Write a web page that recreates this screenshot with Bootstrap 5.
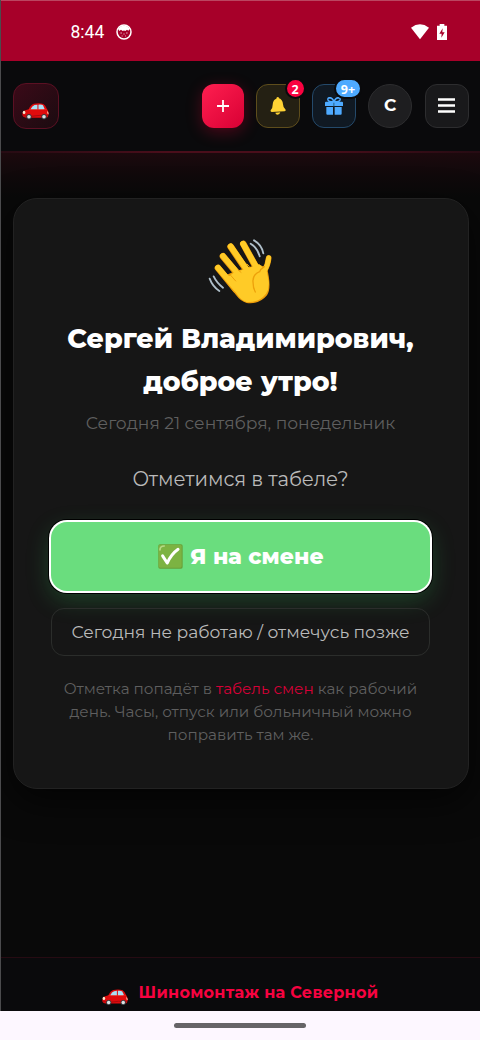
<!DOCTYPE html>
<html lang="ru" data-bs-theme="dark">
<head>
<meta charset="utf-8">
<meta name="viewport" content="width=device-width, initial-scale=1">
<title>Шиномонтаж на Северной</title>
<link href="https://cdn.jsdelivr.net/npm/bootstrap@5.3.0/dist/css/bootstrap.min.css" rel="stylesheet">
<style>
body{background:#090909;font-family:Montserrat,Inter,"Noto Sans",sans-serif;height:1040px;overflow:hidden;color:#fff}
.screen{height:1040px;position:relative}
.screen::before{content:"";position:absolute;left:0;top:0;width:1px;height:1011px;background:#4b4b4d;z-index:2}
.statusbar{height:61px;background:#a70029;border-top:1px solid #bb4560;padding:2px 33.5px 0 70.5px;font:17.5px Roboto,sans-serif;flex:none}
.topbar{height:92px;background:#0a0a0c;padding:0 11.5px 1px 13px;border-bottom:2px solid;border-image:linear-gradient(90deg,#260b13,#4b0e1b 35%,#4b0e1b 65%,#260b13) 1;flex:none}
.logo{width:46px;height:46px;border-radius:13px;border:1px solid #5b1023;background:linear-gradient(135deg,#3b0a18,#1b0b10)}
.tile{width:44px;height:44px;border-radius:12px;border:1px solid #2d2d2f;background:#19191b;position:relative;flex:none}
.tile-add{width:42px;border:0;background:linear-gradient(135deg,#ff1f50,#d80034);box-shadow:0 4px 16px rgba(255,0,60,.28);margin-right:-.4px}
.tile-bell{background:#242013;border-color:#5e4d1c}
.tile-gift{background:#101923;border-color:#24496a}
.tile-user{border-radius:50%;background:#1e1e20;font-size:17px;font-weight:700}
.count{position:absolute;border-radius:11px;border:2px solid #0a0a0c;box-sizing:content-box;height:17px;min-width:17px;font:700 12.5px/20px "Open Sans",sans-serif;text-align:center;background:#fa0240}
.count-red{top:-7px;right:-7px}
.count-blue{top:-7px;right:-7px;background:#4eaaff;width:24px}
.content{height:804px;background:linear-gradient(#1c090d,#10090b 22px,#090909 44px);padding:45px 11.5px 0 12.5px;flex:none}
.panel{height:591px;border:1px solid #222;border-radius:24px;background:#161616;box-shadow:0 12px 36px rgba(0,0,0,.65);padding:38px 37px 0}
.hello{font-size:26.9px;line-height:43px;font-weight:800;margin:9px -10px 0;white-space:nowrap}
.dateline{font-size:17.12px;line-height:28px;color:#5f5f5f;margin-top:6px;white-space:nowrap}
.ask{font-size:19.6px;line-height:31px;color:#bababa;margin-top:27px;white-space:nowrap}
.btn-shift{height:69px;border:0;border-radius:16px;background:#6add7e;color:#fff;font-size:22px;font-weight:800;box-shadow:0 0 0 2px #fff,0 0 0 3px #000,0 8px 24px rgba(52,199,89,.28);margin-top:26.5px;gap:7px;width:379px;padding-left:13px}
.btn-shift:hover{background:#6add7e;color:#fff}
.btn-later{height:48px;width:379px;border:1px solid #2b2d2b;border-radius:13px;color:#bababa;font-size:17.12px;margin-top:17.5px;padding:0;white-space:nowrap}
.hint{font-size:15.22px;line-height:22.9px;color:#5f5f5f;margin-top:22px;white-space:nowrap}
.hint a{color:#d60037;text-decoration:none}
.foot{height:54px;background:#0a0a0c;border-top:1px solid #260b12;padding-top:17px;color:#f70240;font-weight:700;font-size:16px;letter-spacing:.28px;flex:none;gap:11px}
.homebar{height:29px;background:#fdf7ff;flex:none}
.homebar span{width:132px;height:5px;border-radius:3px;background:#666467}
svg{display:block;flex:none}
</style>
</head>
<body>
<svg width="0" height="0" class="position-absolute" aria-hidden="true">
<symbol id="car" viewBox="0 0 82 52">
<path d="M1 33Q1 26 8 23L20 19Q26 5 36 2Q54-1 65 3Q71 6 76 18Q81 22 81 34L79 42Q78 45 71 45H12Q2 44 1 37Z" fill="#df0b0d"/>
<path d="M26 19Q31 8 38 6L47 5V20H29Z" fill="#a9e1f5"/><path d="M50 5Q60 4 64 7L69 18L66 20H50Z" fill="#a9e1f5"/>
<path d="M21 20H75" stroke="#f53126" stroke-width="2"/><path d="M3 39Q28 43 52 38L79 39" stroke="#aa080d" stroke-width="3" fill="none"/>
<ellipse cx="6" cy="29" rx="4" ry="5" fill="#f8e9cd"/><path d="M76 24L81 30V35L77 32Z" fill="#ffb39c"/>
<circle cx="21" cy="42" r="8" fill="#343c40"/><circle cx="67" cy="42" r="8" fill="#343c40"/>
<circle cx="21" cy="42" r="5.500" fill="#d9e1e3"/><circle cx="67" cy="42" r="5.500" fill="#d9e1e3"/>
</symbol>
</svg>
<div class="screen d-flex flex-column">
<div class="statusbar d-flex align-items-center">
<span>8:44</span>
<svg style="margin-left:12px" width="16" height="16" viewBox="0 0 48 48"><circle cx="24" cy="24" r="21" fill="none" stroke="#fff" stroke-width="4.500"/><path d="M6 14Q24-5 42 14L37 20L33 17L28 21Q24 18 20 21L15 17L10 21Z" fill="#fff"/><path d="M13 27h5M30 27h5M22 30h4M17 36h3m7 0h3" stroke="#fff" stroke-width="2"/></svg>
<svg class="ms-auto" width="18" height="16" viewBox="0 0 54 48"><path d="M0 11Q27-9 54 11L27 46Z" fill="#fff"/></svg>
<svg style="margin-left:8px" width="10" height="16" viewBox="0 0 30 48"><path d="M8 0h14v5h8v43H0V5h8Z" fill="#fff"/><path d="M17 13L7 29h7l-1 12L23 25h-7Z" fill="#a70029"/></svg>
</div>
<header class="topbar d-flex align-items-center">
<div class="logo d-flex align-items-center justify-content-center"><svg style="margin:11px 1px 0 0" width="27" height="17"><use href="#car"/></svg></div>
<div class="d-flex ms-auto" style="gap:12.3px">
<div class="tile tile-add d-flex align-items-center justify-content-center"><svg width="12" height="12" viewBox="0 0 12 12"><path d="M6 0v12M0 6h12" stroke="#fff" stroke-width="1.800"/></svg></div>
<div class="tile tile-bell d-flex align-items-center justify-content-center"><svg width="16" height="18" viewBox="0 0 48 54"><path d="M19 5Q19 0 23 0T27 4Q38 8 39 22Q39 32 47 38Q48 42 44 43L5 45Q0 44 2 40Q8 34 8 23Q9 8 19 5Z" fill="#ffd334"/><path d="M16 47L31 46Q29 53 23 53Q17 53 16 47Z" fill="#ffd334"/></svg><span class="count count-red">2</span></div>
<div class="tile tile-gift d-flex align-items-center justify-content-center"><svg width="18" height="18" viewBox="0 0 54 54"><path d="M25 14Q11 15 9 9Q7 2 15 2Q23 3 27 14Q31 3 39 2Q47 2 45 9Q43 15 29 14" fill="none" stroke="#4eaaff" stroke-width="4.500"/><path d="M3 14H51Q54 14 54 17V27H0V17Q0 14 3 14ZM4 30H24V53H7Q4 53 4 50ZM29 30H50V50Q50 53 47 53H29Z" fill="#4eaaff"/><path d="M24.500 17v11h4V17Z" fill="#2f719f"/></svg><span class="count count-blue">9+</span></div>
<div class="tile tile-user d-flex align-items-center justify-content-center">С</div>
<div class="tile d-flex align-items-center justify-content-center"><svg width="17" height="15" viewBox="0 0 17 15"><path d="M0 1.500h17M0 7.500h17M0 13.500h17" stroke="#fff" stroke-width="2.400"/></svg></div>
</div>
</header>
<main class="content">
<section class="panel d-flex flex-column align-items-center text-center">
<svg width="68" height="71" viewBox="50 50 204 213" fill="none" stroke-linecap="round" stroke-linejoin="round">
<g stroke="#ed9d0b" stroke-width="20"><path d="M83 143L137 209M98 108L151 172M121 79L170 152M159 71L206 157"/><path d="M235 113Q233 134 222 151V188" stroke-width="17"/></g>
<path d="M128 155L204 132L230 143Q245 203 230 225Q207 253 169 248Q151 243 137 224L95 170Z" fill="#ed9d0b"/>
<g stroke="#ffcb27" stroke-width="17"><path d="M83 142L139 207M98 107L153 171M121 78L172 151M158 70L207 156"/><path d="M235 112Q233 134 222 151L228 188" stroke-width="14"/></g>
<path d="M130 157L207 132L225 149Q244 198 227 220Q205 248 169 245Q153 241 139 220L106 175Z" fill="#ffcb27"/>
<path d="M222 139Q211 146 208 154Q186 163 188 185Q188 203 195 215" stroke="#eda10b" stroke-width="4"/>
<path d="M121 165L136 182M143 149L152 156M170 131L177 138" stroke="#eda10b" stroke-width="3"/>
<path d="M181 70Q201 82 208 108M191 60Q214 73 219 99M70 168Q79 187 98 202M58 175Q67 199 87 212" stroke="#afbfca" stroke-width="5.500"/>
</svg>
<h1 class="hello">Сергей Владимирович,<br>доброе утро!</h1>
<div class="dateline">Сегодня 21 сентября, понедельник</div>
<div class="ask">Отметимся в табеле?</div>
<button class="btn btn-shift d-flex align-items-center justify-content-center flex-shrink-0"><svg width="25" height="25" viewBox="0 0 76 76"><rect x="1" y="1" width="74" height="74" rx="5" fill="#689f38"/><rect x="2" y="2" width="70" height="70" rx="5" fill="#7cb342"/><path d="M6 18Q6 6 19 6" stroke="#b5d985" stroke-width="5" fill="none" stroke-linecap="round"/><path d="M14 36L28 58Q40 31 61 16" fill="none" stroke="#fff" stroke-width="9" stroke-linecap="round" stroke-linejoin="round"/></svg><span>Я на смене</span></button>
<button class="btn btn-later flex-shrink-0">Сегодня не работаю / отмечусь позже</button>
<p class="hint mb-0">Отметка попадёт в <a href="#">табель смен</a> как рабочий<br>день. Часы, отпуск или больничный можно<br>поправить там же.</p>
</section>
</main>
<footer class="foot d-flex justify-content-center"><svg style="margin-top:14px" width="26" height="17"><use href="#car"/></svg><span style="line-height:36px">Шиномонтаж на Северной</span></footer>
<div class="homebar d-flex align-items-center justify-content-center"><span></span></div>
</div>
<script src="https://cdn.jsdelivr.net/npm/bootstrap@5.3.0/dist/js/bootstrap.bundle.min.js"></script>
</body>
</html>
